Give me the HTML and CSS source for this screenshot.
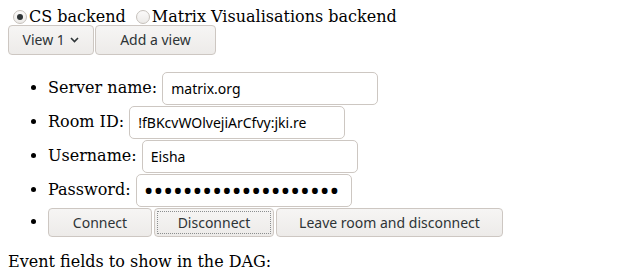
FILE: index.html
```html
<!DOCTYPE html>
<html>
<head>
<meta charset="utf-8">
<link rel="stylesheet" href="styles.css">
</head>
<body>
<div class="backends">
<input type="radio" class="radio" name="backend" id="cs" checked><label for="cs">CS backend</label>
<input type="radio" class="radio" name="backend" id="mv"><label for="mv">Matrix Visualisations backend</label>
</div>
<div class="views"><button class="btn view-btn">View 1 <svg class="chev" width="9" height="6" viewBox="0 0 9 6"><path d="M1 1 L4.5 4.5 L8 1" fill="none" stroke="#2e3436" stroke-width="1.6"/></svg></button><button class="btn add-btn">Add a view</button></div>
<ul class="form">
<li>Server name: <input class="field" type="text" value="matrix.org"></li>
<li>Room ID: <input class="field" type="text" value="!fBKcvWOlvejiArCfvy:jki.re"></li>
<li>Username: <input class="field" type="text" value="Eisha"></li>
<li>Password: <input class="field pw" type="password" value="aaaaaaaaaaaaaaaaaaaa"></li>
<li class="last"><span class="actions"><button class="btn connect">Connect</button><button class="btn disconnect focused">Disconnect</button><button class="btn leave">Leave room and disconnect</button></span></li>
</ul>
<p class="fields">Event fields to show in the DAG:</p>
</body>
</html>
```
FILE: styles.css
```css
html, body {
  background: #ffffff;
}
body {
  margin: 8px;
  font-family: "DejaVu Serif", serif;
  font-size: 16px;
  color: #000;
}
.backends {
  height: 17px;
  line-height: 17px;
}
.radio {
  -webkit-appearance: none;
  appearance: none;
  width: 14px;
  height: 14px;
  margin: 0 2px 0 5px;
  border: 1px solid #c6c1bb;
  border-radius: 50%;
  background: linear-gradient(#fbfafa, #eceae8);
  vertical-align: -2px;
  position: relative;
  box-sizing: border-box;
}
.radio:checked::after {
  content: "";
  position: absolute;
  left: 3px;
  top: 3px;
  width: 6px;
  height: 6px;
  border-radius: 50%;
  background: #2e3436;
}
.views {
  display: flex;
  gap: 1px;
}
.btn {
  font-family: "Noto Sans", sans-serif;
  font-size: 14px;
  color: #2e3436;
  height: 30px;
  padding: 0;
  border: 1px solid #cdc7c2;
  border-radius: 4px;
  background: linear-gradient(#f6f5f4, #edebe9);
  box-sizing: border-box;
  line-height: 26px;
  text-align: center;
}
.view-btn { width: 86px; }
.add-btn { width: 121px; }
.chev { margin-left: 2px; vertical-align: 2px; }
.form {
  margin: 16px 0;
  padding-left: 40px;
}
.form li {
  height: 34px;
  line-height: 34px;
}
.form li.last {
  height: 30px;
  line-height: 30px;
}
.field {
  width: 216px;
  height: 33px;
  box-sizing: border-box;
  border: 1px solid #cdc7c2;
  border-radius: 5px;
  padding: 0 8px;
  font-family: "Noto Sans", sans-serif;
  font-size: 14px;
  color: #000;
  vertical-align: middle;
  margin-top: -1px;
  outline: none;
}
.pw {
  font-size: 26px;
  letter-spacing: 0;
  padding: 0 7px;
}
.actions {
  display: inline-flex;
  gap: 2px;
  vertical-align: top;
  padding-top: 1px;
}
.actions .btn { height: 29px; line-height: 25px; }
.connect { width: 104px; }
.disconnect { width: 120px; }
.leave { width: 227px; }
.focused {
  outline: 1px dotted #8b8e8f;
  outline-offset: -4px;
}
.fields {
  margin: 16px 0 0;
  line-height: 18px;
}
```
